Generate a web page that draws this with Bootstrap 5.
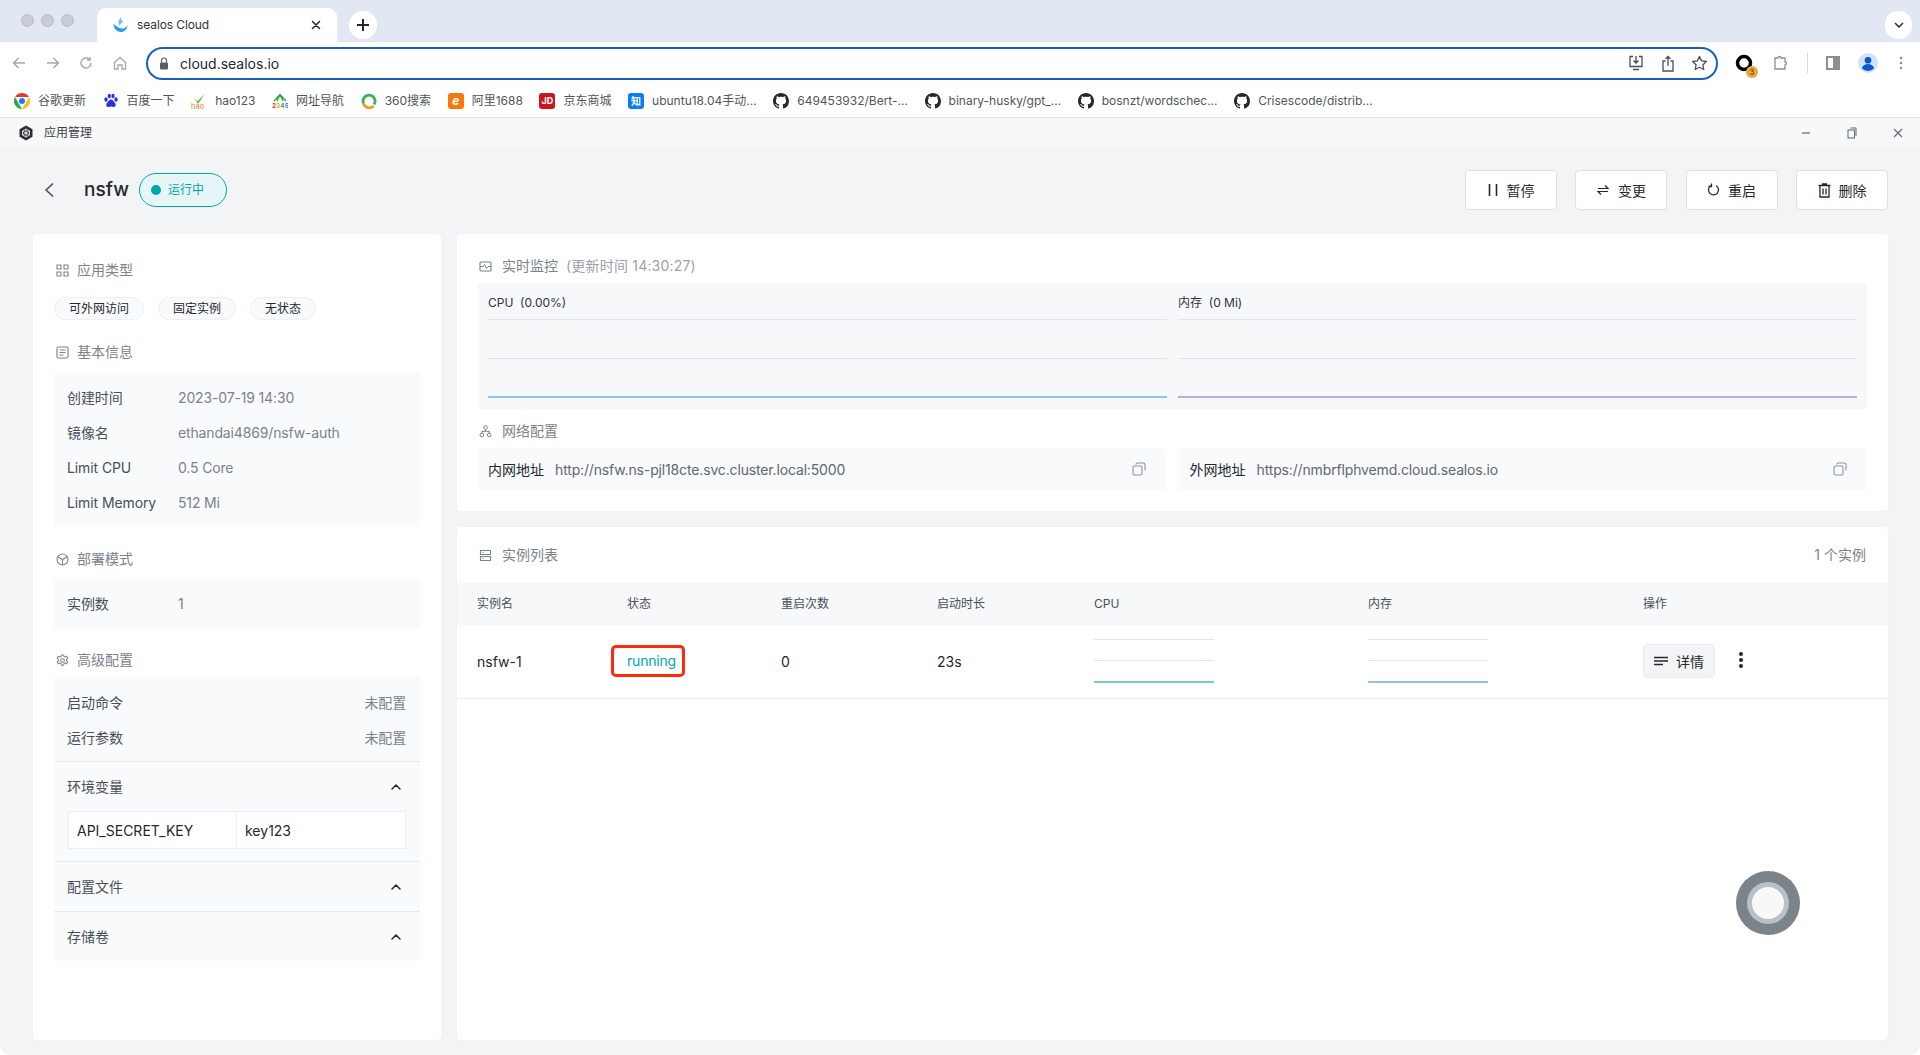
<!DOCTYPE html>
<html lang="zh-CN">
<head>
<meta charset="utf-8">
<title>sealos Cloud</title>
<link href="https://cdn.jsdelivr.net/npm/bootstrap@5.3.0/dist/css/bootstrap.min.css" rel="stylesheet">
<style>
html,body{height:100%;}
body{background:#fff;overflow:hidden;font-family:Inter,"Noto Sans CJK SC",sans-serif;font-size:14px;color:#24282c;display:flex;flex-direction:column;}
svg{display:block;flex:none;}
.tabstrip{height:42px;background:#e1e8f4;padding-left:21px;}
.light{width:13px;height:13px;border-radius:50%;background:#c9ccd2;border:1px solid #b9bcc4;margin-right:7px;}
.lights{margin-top:14px;margin-right:16px;align-self:flex-start;}
.tabcell{width:240px;height:34px;margin-top:8px;background:#fff;border-radius:9px 9px 0 0;padding:0 16px 0 16px;font-size:12px;color:#30343a;gap:9px;}
.tabtitle{letter-spacing:-.1px;}
.newtab{width:28px;height:28px;margin-left:12px;margin-top:11px;border-radius:50%;background:#fff;align-self:flex-start;}
.tabmenu{width:27px;height:28px;margin-left:auto;margin-right:8px;border-radius:13px;background:#fff;}
.toolbar{height:42px;background:#fff;padding-left:11px;position:relative;}
.tool{width:34px;}
.tool-home{width:33px;}
.omni{width:1572px;height:33px;border:2px solid #1a5fc0;border-radius:17px;padding:0 8px 0 11px;font-size:14px;color:#24282c;}
.omnitext{margin-left:11px;}
.omni-right{margin-left:auto;gap:16px;}
.extras{margin-left:17px;}
.ext{position:relative;width:38px;}
.ext-puzzle{width:34px;}
.ext-side{width:32px;}
.ext-user{width:41px;}
.ext-more{width:auto;}
.extbadge{position:absolute;left:11px;top:12px;width:12px;height:12px;border-radius:50%;background:#eda741;color:#5a3a08;font-size:8px;line-height:12px;text-align:center;}
.vsep{width:1px;height:20px;background:#d5dbe6;margin:0 18px 0 0;}
.bookmarks{height:34px;background:#fff;padding-left:14px;border-bottom:1px solid #dfe2e0;font-size:12px;color:#50565c;white-space:nowrap;}
.bmk{gap:8px;margin-right:16.6px;}
.bmk-logo{width:16px;height:16px;border-radius:3px;color:#fff;font-size:10px;font-weight:700;line-height:16px;text-align:center;overflow:hidden;flex:none;}
.bmk-1688{background:#f5790e;font-style:italic;font-size:12px;}
.bmk-jd{background:#c9151e;font-size:9px;}
.bmk-zhi{background:#0a7cf5;}
.titlebar{height:29px;background:#f7f8fa;padding:0 17px 0 18px;font-size:12px;color:#3a3f45;gap:10px;}
.win-ctl{gap:36px;margin-left:auto;}
.appmain{flex:1;min-height:0;background:#f3f4f6;padding:23px 32px 15px 33px;border-radius:0 0 10px 10px;position:relative;display:flex;flex-direction:column;}
.pagehead{height:40px;margin-bottom:24px;}
.back{margin-left:11px;margin-right:30px;}
.appname{font-size:19px;font-weight:500;color:#24282c;}
.runbadge{margin-left:10px;width:88px;height:34px;border:1px solid #00a9a6;border-radius:17px;background:#e6f6f6;color:#00a9a6;font-size:12px;padding-left:11px;gap:7px;}
.rundot{width:10px;height:10px;border-radius:50%;background:#00a9a6;}
.headbtns{margin-left:auto;gap:18.5px;}
.actbtn{width:92px;height:40px;padding:0;background:#fff;border:1px solid #dee0e2;border-radius:4px;font-size:14px;color:#24282c;gap:8px;display:flex;align-items:center;justify-content:center;}
.workarea{flex:1;min-height:0;gap:16px;}
.panel{background:#fff;border-radius:4px;box-shadow:0 0 1px rgba(30,40,60,.08);}
.sidepanel{width:408px;flex:none;padding:26px 21px 0 21px;}
.rightcol{flex:1;min-width:0;gap:16px;}
.sechead{height:20px;line-height:20px;color:#7b838b;font-size:14px;gap:10px;padding-left:1px;}
.sechead-side{padding-left:2px;gap:8px;}
.tagrow{margin-top:17px;gap:14px;}
.apptag{height:23px;line-height:21px;padding:0 14px;border:1px solid #eff0f3;border-radius:12px;background:#f8fafc;font-size:12px;color:#24282c;}
.mt-sec{margin-top:22px;}
.infobox{background:#f8fafc;border-radius:3px;margin-top:11px;padding:7px 14px 7px 13px;color:#485058;}
.infobox-one{margin-top:10px;}
.inforow{height:35px;}
.infolabel{width:111px;flex:none;letter-spacing:-.1px;}
.infoval{color:#7b838b;letter-spacing:-.15px;}
.advbox{background:#f8fafc;border-radius:3px;margin-top:7px;color:#485058;}
.advrows{padding:8px 14px 6px 13px;}
.foldhead{height:50px;padding:0 18px 0 13px;border-top:1px solid #e4eaf2;}
.envtable{margin:0 14px 12px 14px;height:38px;background:#fff;border:1px solid #eceef2;color:#24282c;}
.envkey{width:168px;padding-left:8px;border-right:1px solid #eceef2;height:100%;}
.envval{padding-left:8px;}
.monitorcard{padding:22px 21px 21px;}
.subtle{color:#9aa1a8;margin-left:-2px;letter-spacing:.2px;}
.chartbox{margin-top:7px;background:#f7f8fa;border-radius:3px;padding:10px 10px 11px;gap:11px;}
.chartcol{flex:1;min-width:0;}
.charttitle{height:20px;line-height:20px;font-size:12px;color:#30343a;margin-bottom:6px;}
.gridlines{height:79px;}
.gl{height:1px;background:#e2e5f0;}
.gl-cpu{height:2px;background:#8ac6ec;}
.gl-mem{height:2px;background:#b8aee3;}
.nethead{margin-top:12px;}
.netrow{margin-top:7px;gap:14px;}
.netbox{flex:1;min-width:0;height:42px;background:#f8fafc;border-radius:3px;padding:0 20px 0 10px;gap:11px;color:#24282c;}
.netval{color:#5f6770;letter-spacing:-.15px;}
.copyicon{margin-left:auto;}
.listcard{padding-top:18px;min-height:0;}
.listhead{padding:0 22px 0 22px;margin-bottom:18px;}
.listcount{margin-left:auto;color:#7b838b;}
.inst-table{table-layout:fixed;width:100%;margin:0;--bs-table-bg:transparent;}
.inst-table>thead>tr>th{height:42px;padding:0 0 0 20px;background:#f7f8fa;font-size:12px;font-weight:400;color:#485058;border:0;vertical-align:middle;}
.inst-table>tbody>tr>td{height:73px;padding:0 0 0 20px;border-bottom:1px solid #eceef2;color:#24282c;vertical-align:middle;}
.inst-table>tbody>tr>td.statuscell{padding-left:4px;}
.runmark{display:inline-block;height:32px;line-height:26px;width:74px;padding-left:13px;border:3px solid #ff2a0e;border-radius:5px;color:#00a9a6;letter-spacing:-.2px;}
.minichart{height:44px;}
.mini-cpu{width:120px;}
.mini-mem{width:120px;}
.gl-teal{height:2px;background:#6fd0cc;}
.gl-blue{height:2px;background:#8fc3ee;}
.detailbtn{width:72px;height:34px;padding:0;background:#f4f4f7;border:1px solid #eaebf0;border-radius:4px;font-size:14px;color:#24282c;gap:8px;display:flex;align-items:center;justify-content:center;}
.opcell{gap:23px;}
.opdots{margin-top:-2px;}
.floatball{position:absolute;right:120px;top:724px;width:64px;height:64px;border-radius:50%;background:#7b838b;display:flex;align-items:center;justify-content:center;}
.floatring{width:42px;height:42px;border-radius:50%;background:#f8f8f8;border:5px solid #bcc0c6;}
</style>
</head>
<body>

<svg width="0" height="0" class="position-absolute" aria-hidden="true">
<symbol id="gh" viewBox="0 0 16 16"><path fill="#24292f" d="M8 0C3.58 0 0 3.58 0 8c0 3.54 2.29 6.53 5.47 7.59.4.07.55-.17.55-.38 0-.19-.01-.82-.01-1.49-2.01.37-2.53-.49-2.69-.94-.09-.23-.48-.94-.82-1.13-.28-.15-.68-.52-.01-.53.63-.01 1.08.58 1.23.82.72 1.21 1.87.87 2.33.66.07-.52.28-.87.51-1.07-1.78-.2-3.64-.89-3.64-3.95 0-.87.31-1.59.82-2.15-.08-.2-.36-1.02.08-2.12 0 0 .67-.21 2.2.82.64-.18 1.32-.27 2-.27.68 0 1.36.09 2 .27 1.53-1.04 2.2-.82 2.2-.82.44 1.1.16 1.92.08 2.12.51.56.82 1.27.82 2.15 0 3.07-1.87 3.75-3.65 3.95.29.25.54.73.54 1.48 0 1.07-.01 1.93-.01 2.2 0 .21.15.46.55.38A8.013 8.013 0 0016 8c0-4.42-3.58-8-8-8z"/></symbol>
<symbol id="chev" viewBox="0 0 12 12"><path d="M2 8l4-4 4 4" fill="none" stroke="#24282c" stroke-width="1.5" stroke-linecap="round" stroke-linejoin="round"/></symbol>
<symbol id="copy" viewBox="0 0 14 14"><path d="M4 2.500A1.500 1.500 0 015.500 1h6A1.500 1.500 0 0113 2.500v6M2.500 4h6A1.500 1.500 0 0110 5.500v6A1.500 1.500 0 018.500 13h-6A1.500 1.500 0 011 11.500v-6A1.500 1.500 0 012.500 4z" fill="none" stroke="#8b939b" stroke-width="1.100"/></symbol>
</svg>

<!-- Browser tab strip -->
<div class="tabstrip d-flex align-items-start">
  <div class="lights d-flex"><span class="light"></span><span class="light"></span><span class="light"></span></div>
  <div class="tabcell d-flex align-items-center">
    <svg width="15" height="16" viewBox="0 0 15 16"><path d="M.5 6.500c0 5 3.500 9 8 8.500 3.500-.4 6-3.500 6-7-1 2.500-3 3.800-5.500 3.500C6 11.200 3 9.500.5 6.500z" fill="#2f9bec"/><path d="M8 .5C5.500 2.500 4.500 6 7 9c.3-2 1.500-3.500 3.500-4C9 4 8 2.500 8 .5z" fill="#6fc0f6"/></svg>
    <span class="tabtitle">sealos Cloud</span>
    <svg class="ms-auto" width="10" height="10" viewBox="0 0 10 10"><path d="M1.500 1.500l7 7m0-7l-7 7" stroke="#24282c" stroke-width="1.500" stroke-linecap="round"/></svg>
  </div>
  <div class="newtab d-flex align-items-center justify-content-center">
    <svg width="14" height="14" viewBox="0 0 14 14"><path d="M7 1v12M1 7h12" stroke="#24282c" stroke-width="2"/></svg>
  </div>
  <div class="tabmenu d-flex align-items-center justify-content-center align-self-center mt-2">
    <svg width="10" height="8" viewBox="0 0 10 8"><path d="M1 2l4 4 4-4" fill="none" stroke="#24282c" stroke-width="1.500"/></svg>
  </div>
</div>

<!-- Browser toolbar -->
<div class="toolbar d-flex align-items-center">
  <div class="tool d-flex"><svg width="16" height="14" viewBox="0 0 16 14"><path d="M14 7H3M7.500 2L2.500 7l5 5" fill="none" stroke="#a3a7ad" stroke-width="1.500"/></svg></div>
  <div class="tool d-flex"><svg width="16" height="14" viewBox="0 0 16 14"><path d="M2 7h11M8.500 2l5 5-5 5" fill="none" stroke="#a3a7ad" stroke-width="1.500"/></svg></div>
  <div class="tool d-flex"><svg width="14" height="14" viewBox="0 0 14 14"><path d="M12 7a5 5 0 11-1.500-3.600M11 1v3H8" fill="none" stroke="#a3a7ad" stroke-width="1.400"/></svg></div>
  <div class="tool tool-home d-flex"><svg width="14" height="14" viewBox="0 0 14 14"><path d="M1.500 6.500L7 1.500l5.500 5V13H9V9H5v4H1.500z" fill="none" stroke="#a3a7ad" stroke-width="1.300"/></svg></div>
  <div class="omni d-flex align-items-center">
    <svg width="10" height="13" viewBox="0 0 10 13"><path d="M2.500 5.500V3.500a2.500 2.500 0 015 0v2" fill="none" stroke="#5a5f66" stroke-width="1.200"/><rect x="1" y="5.500" width="8" height="7" rx="1" fill="#5a5f66"/></svg>
    <span class="omnitext">cloud.sealos.io</span>
    <div class="omni-right d-flex align-items-center">
      <svg width="18" height="16" viewBox="0 0 18 16"><path d="M6 1.500H3v10h12v-10h-3M9 1v7M6.500 5.500L9 8l2.500-2.500M6 14.500h6" fill="none" stroke="#4a4f55" stroke-width="1.300"/></svg>
      <svg width="14" height="17" viewBox="0 0 14 17"><path d="M4.500 6H2v10h10V6H9.500M7 11V1.500M4.500 4L7 1.500 9.500 4" fill="none" stroke="#4a4f55" stroke-width="1.300"/></svg>
      <svg width="17" height="16" viewBox="0 0 17 16"><path d="M8.500 1.500l2.100 4.400 4.800.6-3.500 3.300.9 4.700-4.300-2.300-4.300 2.300.9-4.700L1.600 6.500l4.800-.6z" fill="none" stroke="#4a4f55" stroke-width="1.300" stroke-linejoin="round"/></svg>
    </div>
  </div>
  <div class="extras d-flex align-items-center">
    <div class="ext d-flex">
      <svg width="18" height="18" viewBox="0 0 18 18"><circle cx="9" cy="9" r="6.500" fill="none" stroke="#000" stroke-width="3.500"/></svg>
      <span class="extbadge">3</span>
    </div>
    <div class="ext ext-puzzle d-flex"><svg width="16" height="16" viewBox="0 0 16 16"><path d="M2 3h3a1.500 1.500 0 013 0h4v4a1.500 1.500 0 010 3v4H2z" fill="none" stroke="#8b8f95" stroke-width="1.300"/></svg></div>
    <div class="vsep"></div>
    <div class="ext ext-side d-flex"><svg width="14" height="14" viewBox="0 0 14 14"><rect width="14" height="14" fill="#8b8f95"/><rect x="2" y="2" width="5" height="10" fill="#fff"/></svg></div>
    <div class="ext ext-user d-flex"><svg width="20" height="20" viewBox="0 0 18 18"><circle cx="9" cy="9" r="9" fill="#d3e3fd"/><circle cx="9" cy="6.500" r="3" fill="#0b57d0"/><path d="M3.500 14c1-3 3-4 5.500-4s4.500 1 5.500 4a8 8 0 01-11 0z" fill="#0b57d0"/></svg></div>
    <div class="ext ext-more d-flex"><svg width="4" height="14" viewBox="0 0 4 14"><circle cx="2" cy="2" r="1.300" fill="#8b8f95"/><circle cx="2" cy="7" r="1.300" fill="#8b8f95"/><circle cx="2" cy="12" r="1.300" fill="#8b8f95"/></svg></div>
  </div>
</div>

<!-- Bookmarks -->
<div class="bookmarks d-flex align-items-center">
  <div class="bmk d-flex align-items-center"><svg width="16" height="16" viewBox="0 0 16 16"><path d="M1.070 4A8 8 0 0114.930 4H8z" fill="#e33b2e"/><path d="M14.930 4A8 8 0 018 16l3.500-6z" fill="#f8c21c"/><path d="M8 16A8 8 0 011.070 4l3.500 6z" fill="#2da94f"/><circle cx="8" cy="8" r="4" fill="#fff"/><circle cx="8" cy="8" r="3" fill="#2a75f3"/></svg><span>谷歌更新</span></div>
  <div class="bmk d-flex align-items-center"><svg width="16" height="16" viewBox="0 0 16 16" fill="#2932e1"><ellipse cx="3" cy="6.500" rx="1.700" ry="2.200"/><ellipse cx="6.300" cy="3" rx="1.600" ry="2.200"/><ellipse cx="10" cy="3" rx="1.600" ry="2.200"/><ellipse cx="13" cy="6.500" rx="1.700" ry="2.200"/><path d="M8 6.500c-2 0-2.500 2-4 3.500-1.500 1.500-.5 4.500 2 4 1-.2 1.400-.4 2-.4s1 .2 2 .4c2.500.5 3.500-2.500 2-4-1.500-1.500-2-3.500-4-3.500z"/></svg><span>百度一下</span></div>
  <div class="bmk d-flex align-items-center"><svg width="16" height="16" viewBox="0 0 16 16"><path d="M3 4.500l3.500 4 7-7.500-6.500 10z" fill="#5db51f"/><text x="0" y="15.500" font-size="7.500" font-family="Inter,sans-serif" fill="#ee7f12">hao</text></svg><span>hao123</span></div>
  <div class="bmk d-flex align-items-center"><svg width="16" height="16" viewBox="0 0 16 16"><path d="M2 8L8 1.500 14 8M8 1.500L5 8m3-6.500L11 8" fill="none" stroke="#3aa546" stroke-width="1.400"/><text x="0" y="15" font-size="6.500" font-weight="700" font-family="Inter,sans-serif"><tspan fill="#e33b2e">2</tspan><tspan fill="#f0a020">3</tspan><tspan fill="#3aa546">4</tspan><tspan fill="#2a75f3">5</tspan></text></svg><span>网址导航</span></div>
  <div class="bmk d-flex align-items-center"><svg width="16" height="16" viewBox="0 0 16 16"><path d="M13 11.500A6 6 0 102.500 10.500" fill="none" stroke="#38b35c" stroke-width="2.800"/><path d="M2.500 10.500a6 6 0 0010 2.500" fill="none" stroke="#f0a020" stroke-width="2.800"/></svg><span>360搜索</span></div>
  <div class="bmk d-flex align-items-center"><div class="bmk-logo bmk-1688">e</div><span>阿里1688</span></div>
  <div class="bmk d-flex align-items-center"><div class="bmk-logo bmk-jd">JD</div><span>京东商城</span></div>
  <div class="bmk d-flex align-items-center"><div class="bmk-logo bmk-zhi">知</div><span>ubuntu18.04手动...</span></div>
  <div class="bmk d-flex align-items-center"><svg width="16" height="16"><use href="#gh"/></svg><span>649453932/Bert-...</span></div>
  <div class="bmk d-flex align-items-center"><svg width="16" height="16"><use href="#gh"/></svg><span>binary-husky/gpt_...</span></div>
  <div class="bmk d-flex align-items-center"><svg width="16" height="16"><use href="#gh"/></svg><span>bosnzt/wordschec...</span></div>
  <div class="bmk d-flex align-items-center"><svg width="16" height="16"><use href="#gh"/></svg><span>Crisescode/distrib...</span></div>
</div>

<!-- Desktop window title -->
<div class="titlebar d-flex align-items-center">
  <svg width="16" height="16" viewBox="0 0 16 16"><path d="M8 .5l6.500 3.700v7.600L8 15.500l-6.500-3.700V4.200z" fill="#2c3036"/><path d="M8 4l3.500 2v4L8 12l-3.500-2V6zM8 4v8M4.500 6l7 4m0-4l-7 4" fill="none" stroke="#f7f8fa" stroke-width=".8"/></svg>
  <span>应用管理</span>
  <div class="win-ctl d-flex align-items-center">
    <svg width="10" height="10" viewBox="0 0 10 10"><path d="M1 5h8" stroke="#5f6770" stroke-width="1.200"/></svg>
    <svg width="10" height="12" viewBox="0 0 10 12"><rect x="1" y="3" width="6.500" height="8" fill="none" stroke="#5f6770"/><path d="M3.500 1H9v8" fill="none" stroke="#5f6770"/></svg>
    <svg width="10" height="10" viewBox="0 0 10 10"><path d="M1 1l8 8m0-8l-8 8" stroke="#5f6770" stroke-width="1.100"/></svg>
  </div>
</div>

<!-- App -->
<div class="appmain">
  <div class="pagehead d-flex align-items-center">
    <svg class="back" width="10" height="16" viewBox="0 0 10 16"><path d="M8.500 2L2 8l6.500 6" fill="none" stroke="#485058" stroke-width="1.700" stroke-linecap="round" stroke-linejoin="round"/></svg>
    <span class="appname">nsfw</span>
    <div class="runbadge d-flex align-items-center"><span class="rundot"></span><span>运行中</span></div>
    <div class="headbtns d-flex">
      <button class="btn actbtn" type="button"><svg width="12" height="14" viewBox="0 0 12 14"><path d="M2.500 1v12M9.500 1v12" stroke="#24282c" stroke-width="1.600"/></svg><span>暂停</span></button>
      <button class="btn actbtn" type="button"><svg width="14" height="12" viewBox="0 0 14 12"><path d="M2 4.500h10L9 1.500M12 7.500H2l3 3" fill="none" stroke="#24282c" stroke-width="1.200"/></svg><span>变更</span></button>
      <button class="btn actbtn" type="button"><svg width="13" height="14" viewBox="0 0 13 14"><path d="M4 2.500a5 5 0 105 0M4.500 .5v3h-3" fill="none" stroke="#24282c" stroke-width="1.300"/></svg><span>重启</span></button>
      <button class="btn actbtn" type="button"><svg width="13" height="15" viewBox="0 0 13 15"><path d="M.500 2.500h12M4.500 2.500V1h4v1.500M2 2.500h9V14H2zM5 5.500v6M8 5.500v6" fill="none" stroke="#24282c" stroke-width="1.300"/></svg><span>删除</span></button>
    </div>
  </div>

  <div class="workarea d-flex">
    <!-- Left column -->
    <div class="panel sidepanel">
      <div class="sechead sechead-side d-flex align-items-center">
        <svg width="13" height="13" viewBox="0 0 13 13"><path d="M1 1h4v4H1zM8 1h4v4H8zM1 8h4v4H1zM8 8h4v4H8z" fill="none" stroke="#7b838b" stroke-width="1.100"/></svg><span>应用类型</span>
      </div>
      <div class="tagrow d-flex">
        <span class="apptag">可外网访问</span><span class="apptag">固定实例</span><span class="apptag">无状态</span>
      </div>
      <div class="sechead sechead-side mt-sec d-flex align-items-center">
        <svg width="13" height="13" viewBox="0 0 13 13"><rect x="1" y="1" width="11" height="11" rx="1.500" fill="none" stroke="#7b838b" stroke-width="1.100"/><path d="M3.500 4h6M3.500 6.500h6M3.500 9h4" stroke="#7b838b" stroke-width="1.100"/></svg><span>基本信息</span>
      </div>
      <div class="infobox">
        <div class="inforow d-flex align-items-center"><span class="infolabel">创建时间</span><span class="infoval">2023-07-19 14:30</span></div>
        <div class="inforow d-flex align-items-center"><span class="infolabel">镜像名</span><span class="infoval">ethandai4869/nsfw-auth</span></div>
        <div class="inforow d-flex align-items-center"><span class="infolabel">Limit CPU</span><span class="infoval">0.5 Core</span></div>
        <div class="inforow d-flex align-items-center"><span class="infolabel">Limit Memory</span><span class="infoval">512 Mi</span></div>
      </div>
      <div class="sechead sechead-side mt-sec d-flex align-items-center">
        <svg width="13" height="13" viewBox="0 0 13 13"><circle cx="6.500" cy="6.500" r="5.500" fill="none" stroke="#7b838b" stroke-width="1.100"/><path d="M2 3.800l4.500 2.700L11 3.800M6.500 6.500V12" fill="none" stroke="#7b838b" stroke-width="1.100"/></svg><span>部署模式</span>
      </div>
      <div class="infobox infobox-one">
        <div class="inforow d-flex align-items-center"><span class="infolabel">实例数</span><span class="infoval">1</span></div>
      </div>
      <div class="sechead sechead-side mt-sec d-flex align-items-center">
        <svg width="13" height="13" viewBox="0 0 14 14"><path d="M5.800 1h2.400l.4 1.700 1.300.6 1.600-.8 1.200 2.100-1.300 1.200v1.400l1.300 1.200-1.200 2.100-1.600-.8-1.300.7-.4 1.600H5.800l-.4-1.600-1.300-.7-1.600.8-1.200-2.100 1.300-1.200V5.800L1.300 4.600l1.200-2.100 1.600.8 1.300-.6z" fill="none" stroke="#7b838b" stroke-width="1.100" stroke-linejoin="round"/><circle cx="7" cy="7" r="2" fill="none" stroke="#7b838b" stroke-width="1.100"/></svg><span>高级配置</span>
      </div>
      <div class="advbox">
        <div class="advrows">
          <div class="inforow d-flex align-items-center justify-content-between"><span>启动命令</span><span class="infoval">未配置</span></div>
          <div class="inforow d-flex align-items-center justify-content-between"><span>运行参数</span><span class="infoval">未配置</span></div>
        </div>
        <div class="foldhead d-flex align-items-center justify-content-between"><span>环境变量</span><svg width="12" height="12"><use href="#chev"/></svg></div>
        <div class="envtable d-flex align-items-center">
          <div class="envkey d-flex align-items-center">API_SECRET_KEY</div>
          <div class="envval">key123</div>
        </div>
        <div class="foldhead d-flex align-items-center justify-content-between"><span>配置文件</span><svg width="12" height="12"><use href="#chev"/></svg></div>
        <div class="foldhead d-flex align-items-center justify-content-between"><span>存储卷</span><svg width="12" height="12"><use href="#chev"/></svg></div>
      </div>
    </div>

    <!-- Right column -->
    <div class="rightcol d-flex flex-column">
      <div class="panel monitorcard">
        <div class="sechead d-flex align-items-center">
          <svg width="13" height="13" viewBox="0 0 13 13"><rect x="1" y="2" width="11" height="9" rx="1" fill="none" stroke="#7b838b" stroke-width="1.100"/><path d="M1 6.500h3l1.500-2 2 4 1.500-2h3" fill="none" stroke="#7b838b" stroke-width="1"/></svg><span>实时监控</span><span class="subtle">(更新时间 14:30:27)</span>
        </div>
        <div class="chartbox d-flex">
          <div class="chartcol">
            <div class="charttitle">CPU&nbsp; (0.00%)</div>
            <div class="gridlines d-flex flex-column justify-content-between"><div class="gl"></div><div class="gl"></div><div class="gl-cpu"></div></div>
          </div>
          <div class="chartcol">
            <div class="charttitle">内存&nbsp; (0 Mi)</div>
            <div class="gridlines d-flex flex-column justify-content-between"><div class="gl"></div><div class="gl"></div><div class="gl-mem"></div></div>
          </div>
        </div>
        <div class="sechead nethead d-flex align-items-center">
          <svg width="13" height="13" viewBox="0 0 13 13"><circle cx="6.500" cy="2.500" r="1.800" fill="none" stroke="#7b838b"/><circle cx="2.800" cy="10" r="1.800" fill="none" stroke="#7b838b"/><circle cx="10.200" cy="10" r="1.800" fill="none" stroke="#7b838b"/><path d="M2.800 8V6.300h7.400V8M6.500 4.300v2" fill="none" stroke="#7b838b"/></svg><span>网络配置</span>
        </div>
        <div class="netrow d-flex">
          <div class="netbox d-flex align-items-center"><span>内网地址</span><span class="netval">http://nsfw.ns-pjl18cte.svc.cluster.local:5000</span><svg class="copyicon" width="14" height="14"><use href="#copy"/></svg></div>
          <div class="netbox d-flex align-items-center"><span>外网地址</span><span class="netval">https://nmbrflphvemd.cloud.sealos.io</span><svg class="copyicon" width="14" height="14"><use href="#copy"/></svg></div>
        </div>
      </div>

      <div class="panel listcard flex-grow-1">
        <div class="listhead sechead d-flex align-items-center">
          <svg width="13" height="13" viewBox="0 0 13 13"><path d="M1.500 1.500h10v4h-10zM1.500 7.500h10v4h-10zM3.500 3.500h1M3.500 9.500h1" fill="none" stroke="#7b838b" stroke-width="1.100"/></svg><span>实例列表</span>
          <span class="listcount">1 个实例</span>
        </div>
        <table class="table inst-table">
          <colgroup><col style="width:150px"><col style="width:154px"><col style="width:156px"><col style="width:157px"><col style="width:274px"><col style="width:275px"><col></colgroup>
          <thead><tr><th>实例名</th><th>状态</th><th>重启次数</th><th>启动时长</th><th>CPU</th><th>内存</th><th>操作</th></tr></thead>
          <tbody><tr>
            <td>nsfw-1</td>
            <td class="statuscell"><span class="runmark">running</span></td>
            <td>0</td>
            <td>23s</td>
            <td><div class="minichart mini-cpu d-flex flex-column justify-content-between"><div class="gl"></div><div class="gl"></div><div class="gl-teal"></div></div></td>
            <td><div class="minichart mini-mem d-flex flex-column justify-content-between"><div class="gl"></div><div class="gl"></div><div class="gl-blue"></div></div></td>
            <td>
              <div class="opcell d-flex align-items-center">
                <button class="btn detailbtn" type="button"><svg width="14" height="10" viewBox="0 0 14 10"><path d="M0 1.500h14M0 5h14M0 8.500h9" stroke="#24282c" stroke-width="1.400"/></svg><span>详情</span></button>
                <svg class="opdots" width="6" height="18" viewBox="0 0 6 18"><circle cx="3" cy="3" r="2" fill="#24282c"/><circle cx="3" cy="9" r="2" fill="#24282c"/><circle cx="3" cy="15" r="2" fill="#24282c"/></svg>
              </div>
            </td>
          </tr></tbody>
        </table>
      </div>
    </div>
  </div>

  <div class="floatball"><div class="floatring"></div></div>
</div>

<script src="https://cdn.jsdelivr.net/npm/bootstrap@5.3.0/dist/js/bootstrap.bundle.min.js"></script>
</body>
</html>
